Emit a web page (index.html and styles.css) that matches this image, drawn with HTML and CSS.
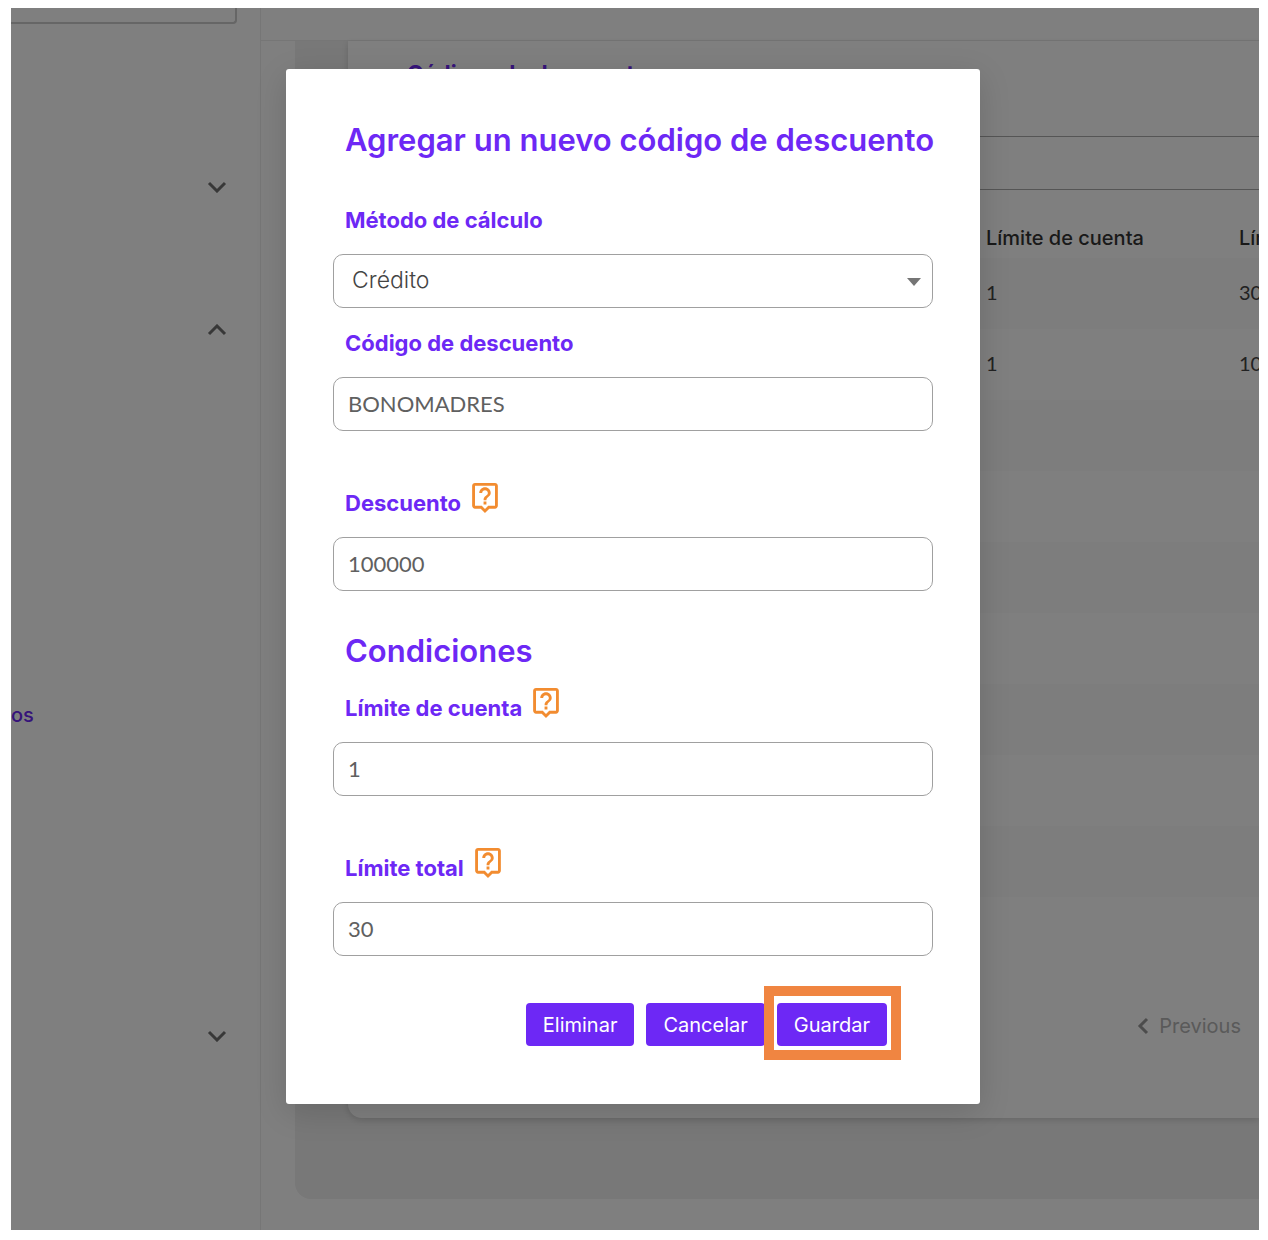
FILE: index.html
```html
<!DOCTYPE html>
<html lang="es">
<head>
<meta charset="utf-8">
<meta name="viewport" content="width=device-width, initial-scale=1">
<title>Códigos de descuento</title>
<link rel="stylesheet" href="styles.css">
</head>
<body>
<div class="app">
  <aside class="sidebar">
    <input class="sidebar-search" type="search" aria-label="Buscar">
    <nav class="menu">
      <button class="menu-toggle" type="button" aria-label="Expandir"><svg class="chevron" viewBox="0 0 20 12"><path d="M2 2l8 8 8-8"/></svg></button>
      <button class="menu-toggle menu-open" type="button" aria-label="Contraer"><svg class="chevron" viewBox="0 0 20 12"><path d="M2 10l8-8 8 8"/></svg></button>
      <a class="menu-link" href="#">os</a>
      <button class="menu-toggle" type="button" aria-label="Expandir"><svg class="chevron" viewBox="0 0 20 12"><path d="M2 2l8 8 8-8"/></svg></button>
    </nav>
  </aside>
  <main class="main">
    <header class="topbar"></header>
    <div class="panel">
      <section class="card">
        <h1 class="card-title">Códigos de descuento</h1>
        <input class="filter" type="search" aria-label="Filtrar">
        <table class="codes">
          <thead><tr><th class="col-wide"></th><th>Límite de cuenta</th><th>Límite total</th></tr></thead>
          <tbody>
            <tr><td></td><td>1</td><td>30</td></tr>
            <tr><td></td><td>1</td><td>10</td></tr>
            <tr><td></td><td></td><td></td></tr>
            <tr><td></td><td></td><td></td></tr>
            <tr><td></td><td></td><td></td></tr>
            <tr><td></td><td></td><td></td></tr>
            <tr><td></td><td></td><td></td></tr>
            <tr><td></td><td></td><td></td></tr>
            <tr><td></td><td></td><td></td></tr>
            <tr><td></td><td></td><td></td></tr>
          </tbody>
        </table>
        <div class="pager">
          <button class="pager-button" type="button" disabled><svg class="pager-icon" viewBox="0 0 12 18"><path d="M10 2L3 9l7 7"/></svg>Previous</button>
        </div>
      </section>
    </div>
  </main>

  <div class="backdrop">
    <form class="modal" role="dialog" aria-labelledby="modal-title">
      <h2 class="heading" id="modal-title">Agregar un nuevo código de descuento</h2>
      <div class="field">
        <div class="label-row"><label class="label" for="method">Método de cálculo</label></div>
        <div class="select-wrap">
          <select class="control select" id="method"><option>Crédito</option></select>
          <svg class="caret" viewBox="0 0 14 8"><path d="M0 0h14L7 8z"/></svg>
        </div>
      </div>
      <div class="field">
        <div class="label-row"><label class="label" for="code">Código de descuento</label></div>
        <input class="control" id="code" type="text" value="BONOMADRES">
      </div>
      <div class="field field-spaced">
        <div class="label-row"><label class="label" for="discount">Descuento</label>
          <svg class="help" viewBox="3 2 18 21"><path d="M19 2H5c-1.11 0-2 .9-2 2v14c0 1.1.89 2 2 2h4l3 3 3-3h4c1.1 0 2-.9 2-2V4c0-1.1-.9-2-2-2zm0 16h-4.83l-.59.59L12 20.17l-1.59-1.59-.58-.58H5V4h14v14zm-8-3h2v2h-2zm1-8c1.1 0 2 .9 2 2 0 2-3 1.75-3 5h2c0-2.25 3-2.5 3-5 0-2.21-1.79-4-4-4S8 6.79 8 9h2c0-1.1.9-2 2-2z"/></svg>
        </div>
        <input class="control" id="discount" type="text" value="100000">
      </div>
      <h2 class="heading heading-section">Condiciones</h2>
      <div class="field">
        <div class="label-row"><label class="label" for="account-limit">Límite de cuenta</label>
          <svg class="help" viewBox="3 2 18 21"><path d="M19 2H5c-1.11 0-2 .9-2 2v14c0 1.1.89 2 2 2h4l3 3 3-3h4c1.1 0 2-.9 2-2V4c0-1.1-.9-2-2-2zm0 16h-4.83l-.59.59L12 20.17l-1.59-1.59-.58-.58H5V4h14v14zm-8-3h2v2h-2zm1-8c1.1 0 2 .9 2 2 0 2-3 1.75-3 5h2c0-2.25 3-2.5 3-5 0-2.21-1.79-4-4-4S8 6.79 8 9h2c0-1.1.9-2 2-2z"/></svg>
        </div>
        <input class="control" id="account-limit" type="text" value="1">
      </div>
      <div class="field field-spaced">
        <div class="label-row"><label class="label" for="total-limit">Límite total</label>
          <svg class="help" viewBox="3 2 18 21"><path d="M19 2H5c-1.11 0-2 .9-2 2v14c0 1.1.89 2 2 2h4l3 3 3-3h4c1.1 0 2-.9 2-2V4c0-1.1-.9-2-2-2zm0 16h-4.83l-.59.59L12 20.17l-1.59-1.59-.58-.58H5V4h14v14zm-8-3h2v2h-2zm1-8c1.1 0 2 .9 2 2 0 2-3 1.75-3 5h2c0-2.25 3-2.5 3-5 0-2.21-1.79-4-4-4S8 6.79 8 9h2c0-1.1.9-2 2-2z"/></svg>
        </div>
        <input class="control" id="total-limit" type="text" value="30">
      </div>
      <div class="actions">
        <button class="button" type="button">Eliminar</button>
        <button class="button" type="button">Cancelar</button>
        <button class="button button-marked" type="submit">Guardar</button>
      </div>
    </form>
  </div>
</div>
</body>
</html>
```
FILE: styles.css
```css
* { box-sizing: border-box; }

body {
  margin: 0;
  padding: 8px 9px 10px 11px;
  background: #fff;
  color: #333;
  font-family: Inter, "Liberation Sans", sans-serif;
  font-size: 20px;
  line-height: 28px;
}

h1, h2 { margin: 0; }
button, input, select { font: inherit; }
svg { display: block; flex: none; }

.app {
  position: relative;
  display: flex;
  min-height: calc(100vh - 18px);
  overflow: hidden;
}

/* Sidebar */
.sidebar {
  flex: 0 0 250px;
  border-right: 1px solid #ececec;
}

.sidebar-search {
  display: block;
  width: 226px;
  height: 16px;
  border: 2px solid #ccc;
  border-width: 0 2px 2px 0;
  border-radius: 0 0 4px 0;
  background: #fff;
}

.menu {
  display: flex;
  flex-direction: column;
  padding-top: 143px;
}

.menu-toggle {
  align-self: flex-end;
  height: 40px;
  margin: 0 33px 103px 0;
  padding: 0;
  border: 0;
  background: none;
}

.menu-open { margin-bottom: 351px; }

.chevron {
  width: 20px;
  height: 12px;
  fill: none;
  stroke: #707070;
  stroke-width: 3;
}

.menu-link {
  margin-bottom: 287px;
  color: #6d28f5;
  font-weight: 500;
  text-decoration: none;
}

/* Page content */
.main {
  flex: 1;
  min-width: 0;
}

.topbar {
  height: 33px;
  border-bottom: 1px solid #ececec;
}

.panel {
  margin-left: 34px;
  padding: 0 0 81px 53px;
  border-radius: 0 0 0 16px;
  background: #f0f0f0;
}

.card {
  border-radius: 0 0 0 14px;
  background: #fff;
  box-shadow: 0 2px 6px rgba(0, 0, 0, .14);
  overflow: hidden;
}

.card-title {
  padding: 18px 0 49px 59px;
  color: #6d28f5;
  font-size: 22px;
  line-height: 28px;
}

.filter {
  display: block;
  width: 100%;
  height: 54px;
  border: 1px solid #aaa;
  border-width: 1px 0;
  background: #fff;
}

.codes {
  width: 1031px;
  margin-top: 28px;
  border-collapse: collapse;
  table-layout: fixed;
}

.codes th, .codes td {
  width: 253px;
  height: 71px;
  padding: 0 0 4px;
  color: #444;
  font-family: Lato, "Liberation Sans", sans-serif;
  font-weight: 400;
  text-align: left;
}

.codes th {
  height: 40px;
  padding: 0;
  color: #333;
  font-family: Inter, "Liberation Sans", sans-serif;
  font-weight: 500;
}

.codes .col-wide { width: 638px; }
.codes th + th + th { width: 140px; }
.codes tbody tr:nth-child(odd) { background: #fafafa; }

.pager {
  display: flex;
  justify-content: flex-end;
  padding: 44px 18px 78px;
}

.pager-button {
  display: flex;
  align-items: center;
  gap: 10px;
  padding: 0;
  border: 0;
  background: none;
  color: #b4b4b4;
}

.pager-icon {
  width: 12px;
  height: 18px;
  fill: none;
  stroke: #999;
  stroke-width: 3;
}

/* Dialog */
.backdrop {
  position: absolute;
  inset: 0;
  display: flex;
  align-items: flex-start;
  justify-content: center;
  padding: 61px 4px 0 0;
  background: rgba(0, 0, 0, .5);
}

.modal {
  width: 694px;
  padding: 53px 47px 58px;
  border-radius: 3px;
  background: #fff;
  box-shadow: 0 8px 32px rgba(0, 0, 0, .14);
}

.heading {
  padding-left: 12px;
  color: #6d28f5;
  font-size: 31px;
  font-weight: 600;
  line-height: 36px;
  white-space: nowrap;
}

.field { padding-top: 21px; }
.heading + .field { padding-top: 48px; }
.field-spaced { padding-top: 58px; }
.heading-section { padding-top: 42px; }
.heading-section + .field { padding-top: 25px; }

.label-row {
  display: flex;
  align-items: flex-end;
  gap: 11px;
  height: 28px;
  margin-bottom: 20px;
  padding-left: 12px;
}

.label {
  color: #6d28f5;
  font-size: 22px;
  font-weight: 700;
}

.help {
  width: 26px;
  height: 30px;
  margin-bottom: 4px;
  fill: #f28c30;
}

.control {
  display: block;
  width: 100%;
  height: 54px;
  padding: 0 14px 2px;
  border: 1px solid #a0a0a0;
  border-radius: 10px;
  background: #fff;
  color: #606060;
  font-family: Lato, "Liberation Sans", sans-serif;
  font-size: 22px;
}

.select-wrap { position: relative; }

.select {
  padding-left: 18px;
  color: #444;
  font-family: Inter, "Liberation Sans", sans-serif;
  font-size: 23px;
  font-weight: 300;
  appearance: none;
}

.caret {
  position: absolute;
  top: 24px;
  right: 12px;
  width: 14px;
  height: 8px;
  fill: #757575;
  pointer-events: none;
}

.actions {
  display: flex;
  justify-content: flex-end;
  gap: 12px;
  padding: 47px 46px 0 0;
}

.button {
  position: relative;
  height: 43px;
  padding: 0 17px;
  border: 0;
  border-radius: 4px;
  background: #6d28f5;
  color: #fff;
}

.button-marked::after {
  content: "";
  position: absolute;
  inset: -17px -14px -14px -13px;
  border: 10px solid #f08541;
}
```
